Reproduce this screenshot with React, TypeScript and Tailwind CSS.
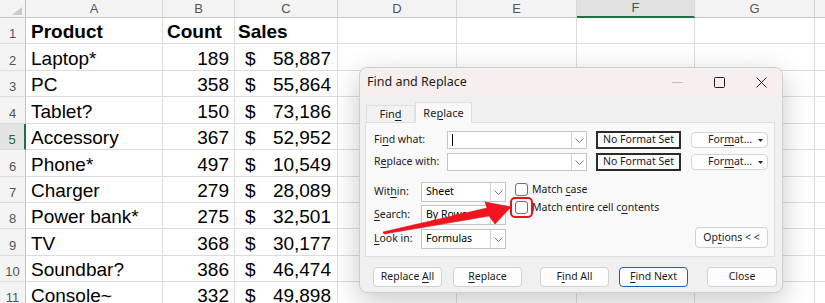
import React from 'react';

type Row = { n: number; a: string; b: string; c: string; bold?: boolean; h: string };

const rows: Row[] = [
  { n: 1, a: 'Product', b: 'Count', c: 'Sales', bold: true, h: 'h-[26px]' },
  { n: 2, a: 'Laptop*', b: '189', c: '58,887', h: 'h-[27px]' },
  { n: 3, a: 'PC', b: '358', c: '55,864', h: 'h-[26px]' },
  { n: 4, a: 'Tablet?', b: '150', c: '73,186', h: 'h-[27px]' },
  { n: 5, a: 'Accessory', b: '367', c: '52,952', h: 'h-[26px]' },
  { n: 6, a: 'Phone*', b: '497', c: '10,549', h: 'h-[27px]' },
  { n: 7, a: 'Charger', b: '279', c: '28,089', h: 'h-[26px]' },
  { n: 8, a: 'Power bank*', b: '275', c: '32,501', h: 'h-[26px]' },
  { n: 9, a: 'TV', b: '368', c: '30,177', h: 'h-[27px]' },
  { n: 10, a: 'Soundbar?', b: '386', c: '46,474', h: 'h-[26px]' },
  { n: 11, a: 'Console~', b: '332', c: '49,898', h: 'h-[26px]' },
];

const letters = ['A', 'B', 'C', 'D', 'E', 'F', 'G', 'H'];
const colW = [
  'w-[137px]',
  'w-[72px]',
  'w-[103px]',
  'w-[119px]',
  'w-[120px]',
  'w-[118px]',
  'w-[120px]',
  'w-[100px]',
];

function Sheet() {
  return (
    <div className="flex flex-col font-['Liberation_Sans',Arial,sans-serif]">
      {/* column headers */}
      <div className="flex h-[18px] bg-[#f3f3f3]">
        <div className="relative w-[26px] shrink-0 border-r border-b border-[#c6c6c6]">
          <div className="absolute right-[3px] bottom-[2px] w-0 h-0 border-l-[10px] border-l-transparent border-b-[8px] border-b-[#c9c9c9]" />
        </div>
        {letters.map((l, i) => (
          <div
            key={l}
            className={`${colW[i]} shrink-0 flex items-center justify-center text-[13px] border-r border-[#d6d6d6] ${
              l === 'F'
                ? 'bg-[#e1e1e1] text-[#1d6b3a] border-b-2 border-b-[#1e7145]'
                : 'text-[#555] border-b border-b-[#c6c6c6]'
            }`}
          >
            {l}
          </div>
        ))}
      </div>

      {rows.map((r) => (
        <div key={r.n} className={`flex ${r.h} shrink-0`}>
          <div
            className={`w-[26px] shrink-0 flex items-end justify-center leading-[18px] text-[13px] border-b border-b-[#dcdcdc] ${
              r.n === 5
                ? 'bg-[#e3e3e3] text-[#1d6b3a] border-r-2 border-r-[#1e7145]'
                : 'bg-[#f3f3f3] text-[#555] border-r border-r-[#c6c6c6]'
            }`}
          >
            {r.n}
          </div>
          <div
            className={`${colW[0]} shrink-0 flex items-end pl-[5px] text-[19px] leading-[22px] text-black border-r border-b border-[#dcdcdc] ${
              r.bold ? 'font-bold' : ''
            }`}
          >
            {r.a}
          </div>
          {r.bold ? (
            <>
              <div className={`${colW[1]} shrink-0 flex items-end pl-[4px] text-[19px] leading-[22px] font-bold border-r border-b border-[#dcdcdc]`}>
                {r.b}
              </div>
              <div className={`${colW[2]} shrink-0 flex items-end pl-[3px] text-[19px] leading-[22px] font-bold border-r border-b border-[#dcdcdc]`}>
                {r.c}
              </div>
            </>
          ) : (
            <>
              <div className={`${colW[1]} shrink-0 flex items-end justify-end pr-[5px] text-[19px] leading-[22px] border-r border-b border-[#dcdcdc]`}>
                {r.b}
              </div>
              <div className={`${colW[2]} shrink-0 flex items-end justify-between pl-[10px] pr-[6px] text-[19px] leading-[22px] border-r border-b border-[#dcdcdc]`}>
                <span>$</span>
                <span>{r.c}</span>
              </div>
            </>
          )}
          {colW.slice(3).map((w, i) => (
            <div key={i} className={`${w} shrink-0 border-r border-b border-[#dcdcdc]`} />
          ))}
        </div>
      ))}
    </div>
  );
}

function U({ children }: { children: React.ReactNode }) {
  return <span className="underline underline-offset-[2px] decoration-1">{children}</span>;
}

function Chevron() {
  return (
    <svg width="9" height="5" viewBox="0 0 9 5">
      <path d="M0.5 0.5 L4.5 4.5 L8.5 0.5" fill="none" stroke="#7a7a7a" strokeWidth="1" />
    </svg>
  );
}

function Combo({ w, h, children }: { w: string; h: string; children?: React.ReactNode }) {
  return (
    <div className={`${w} ${h} flex bg-white border border-[#c4c4c4]`}>
      <div className="flex-1 flex items-center pl-[4px] text-black overflow-hidden whitespace-nowrap">
        {children}
      </div>
      <div className="w-[15px] flex items-center justify-center border-l border-[#d4d4d4]">
        <Chevron />
      </div>
    </div>
  );
}

function Checkbox() {
  return <div className="w-[13px] h-[13px] rounded-[3px] border border-[#6f6f6f] bg-[#fcfcfc]" />;
}

function Btn({ w, children, primary }: { w: string; children: React.ReactNode; primary?: boolean }) {
  return (
    <div
      className={`${w} h-[20px] flex items-center justify-center rounded-[4px] bg-[#fdfdfd] ${
        primary ? 'border border-[#0f65c0]' : 'border border-[#d2d2d2]'
      }`}
    >
      <span>{children}</span>
    </div>
  );
}

function FormatBtn() {
  return (
    <div className="ml-[10px] w-[77px] h-[16px] flex items-center rounded-[4px] border border-[#d6d6d6] bg-white pl-[16px] pr-[4px]">
      <span>
        For<U>m</U>at...
      </span>
      <svg width="5" height="3" viewBox="0 0 5 3" className="ml-auto">
        <path d="M0 0 H5 L2.5 3 Z" fill="#222" />
      </svg>
    </div>
  );
}

function FindReplaceDialog() {
  return (
    <div className="absolute left-[359px] top-[67px] w-[424px] h-[226px] z-10 flex flex-col whitespace-nowrap rounded-[8px] border border-[#cfcfcf] bg-[#f0f0f0] shadow-[0_8px_28px_rgba(0,0,0,0.22)] font-['Noto_Sans',sans-serif] text-[10.5px] text-[#1b1b1b]">
      {/* title bar */}
      <div className="h-[28px] shrink-0 flex items-center rounded-t-[8px] bg-[#f7efed] pl-[7px]">
        <span className="text-[12.5px]">Find and Replace</span>
        <div className="ml-auto flex h-full">
          <div className="w-[42px] flex items-center justify-center">
            <svg width="11" height="11" viewBox="0 0 11 11">
              <path d="M0 5.5 H11" stroke="#bdbdbd" strokeWidth="1" />
            </svg>
          </div>
          <div className="w-[42px] flex items-center justify-center">
            <svg width="11" height="11" viewBox="0 0 11 11">
              <rect x="0.5" y="0.5" width="10" height="10" rx="1" fill="none" stroke="#1f1f1f" strokeWidth="1" />
            </svg>
          </div>
          <div className="w-[42px] flex items-center justify-center">
            <svg width="11" height="11" viewBox="0 0 11 11">
              <path d="M0.5 0.5 L10.5 10.5 M10.5 0.5 L0.5 10.5" stroke="#1f1f1f" strokeWidth="1" />
            </svg>
          </div>
        </div>
      </div>

      {/* tabs */}
      <div className="flex items-end pt-[6px] pl-[6px] shrink-0 text-[11px]">
        <div className="w-[49px] h-[17px] flex items-center justify-center border border-b-0 border-[#dedede] bg-[#f2f2f2]">
          <span>
            Fin<U>d</U>
          </span>
        </div>
        <div className="relative z-10 -mb-px w-[57px] h-[21px] flex items-center justify-center border border-b-0 border-[#dedede] bg-[#f9f9f9]">
          <span>
            Re<U>p</U>lace
          </span>
        </div>
      </div>

      {/* panel */}
      <div className="ml-[5px] mr-[7px] h-[135px] shrink-0 border border-[#dedede] bg-[#f9f9f9] pt-[8px] pl-[8px] pr-[6px]">
        <div className="flex items-center h-[18px]">
          <div className="w-[73px]">
            Fi<U>n</U>d what:
          </div>
          <Combo w="w-[140px]" h="h-[18px]">
            <span className="w-px h-[12px] bg-black" />
          </Combo>
          <div className="ml-[9px] w-[85px] h-[18px] flex items-center justify-center border-2 border-[#2a2a2a] bg-[#fbfbfb]">
            No Format Set
          </div>
          <FormatBtn />
        </div>
        <div className="flex items-center h-[18px] mt-[4px]">
          <div className="w-[73px]">
            R<U>e</U>place with:
          </div>
          <Combo w="w-[140px]" h="h-[18px]" />
          <div className="ml-[9px] w-[85px] h-[18px] flex items-center justify-center border-2 border-[#2a2a2a] bg-[#fbfbfb]">
            No Format Set
          </div>
          <FormatBtn />
        </div>

        <div className="flex mt-[11px]">
          <div className="flex flex-col">
            <div className="flex items-center h-[20px]">
              <div className="w-[47px]">
                Wit<U>h</U>in:
              </div>
              <Combo w="w-[85px]" h="h-[20px]">Sheet</Combo>
            </div>
            <div className="flex items-center h-[20px] mt-[3px]">
              <div className="w-[47px]">
                <U>S</U>earch:
              </div>
              <Combo w="w-[85px]" h="h-[20px]">By Rows</Combo>
            </div>
            <div className="flex items-center h-[20px] mt-[4px]">
              <div className="w-[47px]">
                <U>L</U>ook in:
              </div>
              <Combo w="w-[85px]" h="h-[20px]">Formulas</Combo>
            </div>
          </div>

          <div className="ml-[9px] flex flex-col">
            <div className="flex items-center gap-[4px] h-[13px] mt-[1px]">
              <Checkbox />
              <span>
                Match <U>c</U>ase
              </span>
            </div>
            <div className="flex items-center gap-[4px] h-[13px] mt-[5px]">
              <div className="relative">
                <Checkbox />
                <div className="absolute -left-[5px] -top-[4px] w-[23px] h-[21px] rounded-[5px] border-2 border-[#e8121b]" />
              </div>
              <span>
                Match entire cell c<U>o</U>ntents
              </span>
            </div>
          </div>

          <div className="ml-auto self-end mb-[1px] w-[73px] h-[21px] flex items-center justify-center rounded-[4px] border border-[#d2d2d2] bg-[#fdfdfd]">
            <span>
              Op<U>t</U>ions &lt; &lt;
            </span>
          </div>
        </div>
      </div>

      {/* bottom buttons */}
      <div className="flex mt-[10px] pl-[13px]">
        <Btn w="w-[69px]">
          Replace <U>A</U>ll
        </Btn>
        <div className="ml-[11px]">
          <Btn w="w-[69px]">
            <U>R</U>eplace
          </Btn>
        </div>
        <div className="ml-[18px]">
          <Btn w="w-[69px]">
            F<U>i</U>nd All
          </Btn>
        </div>
        <div className="ml-[10px]">
          <Btn w="w-[69px]" primary>
            <U>F</U>ind Next
          </Btn>
        </div>
        <div className="ml-[19px]">
          <Btn w="w-[70px]">Close</Btn>
        </div>
      </div>
    </div>
  );
}

function Arrow() {
  return (
    <svg
      className="absolute left-0 top-0 z-20 pointer-events-none"
      width="825"
      height="303"
      viewBox="0 0 825 303"
    >
      <polygon
        points="383,232 487,208 485,202 511,207 495,224 489,216 384,234"
        fill="#f0141e"
        stroke="#d8101a"
        strokeWidth="0.6"
        strokeLinejoin="round"
      />
    </svg>
  );
}

export default function App() {
  return (
    <div className="relative w-[825px] h-[303px] overflow-hidden bg-white">
      <Sheet />
      <FindReplaceDialog />
      <Arrow />
    </div>
  );
}
